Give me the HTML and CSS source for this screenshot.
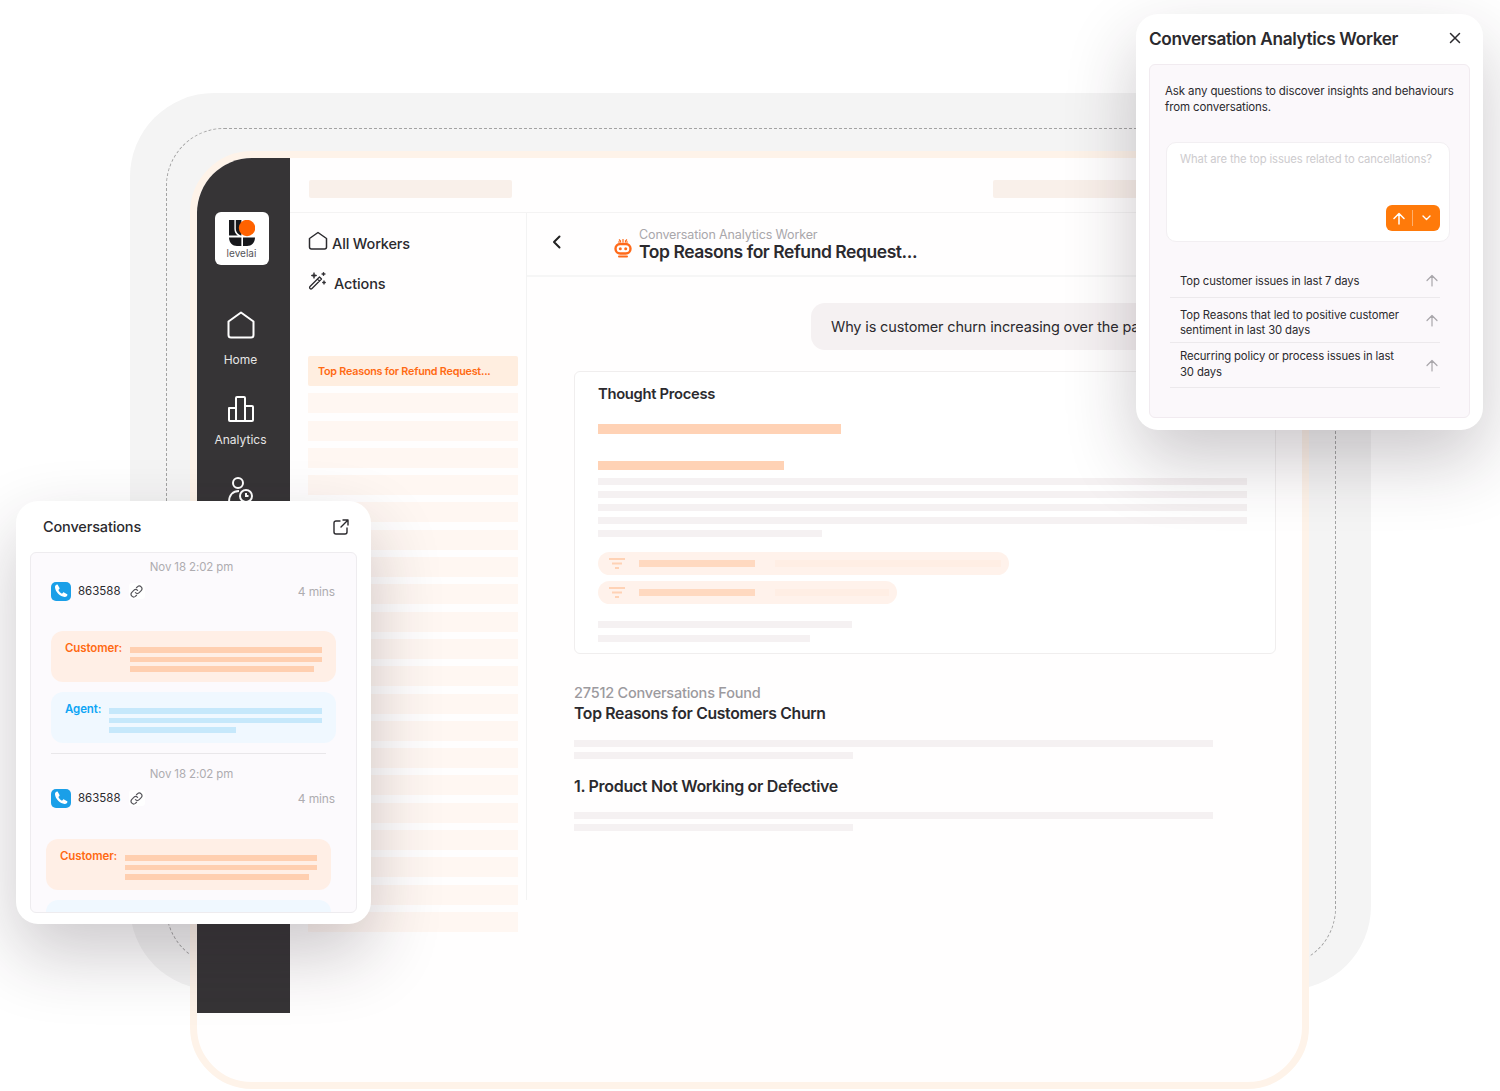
FILE: index.html
```html
<!DOCTYPE html>
<html>

<head>
    <title>Conversation Analytics Worker</title>
    <link rel="stylesheet" href="styles.css">
</head>

<body>

    <div class="scene">
        <div class="backdrop"></div>
        <div class="dashed"></div>

        <!-- Main app window -->
        <div class="frame">
            <aside class="sidebar">
                <div class="logo">
                    <svg width="26" height="26" viewBox="0 0 26 26">
                        <path fill="#17181c" d="M0 0h5.4v9c0 3 1.2 5 3.4 6.6H0z" />
                        <path fill="#17181c" d="M6.8 0h5.6v15.6C9 14.600 6.800 12 6.800 8.500z" />
                        <path fill="#17181c" d="M0 17.500h12.400V26H8C3.500 26 0 22.500 0 17.500z" />
                        <path fill="#17181c" d="M14 17.500h12c0 5-3.500 8.500-8 8.500h-4z" />
                        <circle fill="#ff6200" cx="18" cy="8" r="8.200" />
                    </svg>
                    <span class="logo-name">levelai</span>
                </div>
                <div class="side-item side-home">
                    <svg width="30" height="30" viewBox="0 0 30 30" fill="none" stroke="#fff" stroke-width="2" stroke-linejoin="round">
                        <path d="M2.500 11.500 15 2.500l12.500 9V25a2.500 2.500 0 0 1-2.500 2.500H5A2.500 2.500 0 0 1 2.500 25z" />
                    </svg>
                    <span>Home</span>
                </div>
                <div class="side-item side-analytics">
                    <svg width="30" height="30" viewBox="0 0 30 30" fill="none" stroke="#fff" stroke-width="2" stroke-linejoin="round">
                        <path d="M3 14h7v13H4a1 1 0 0 1-1-1zM10 4a1 1 0 0 1 1-1h7a1 1 0 0 1 1 1v23h-9zM19 12h7a1 1 0 0 1 1 1v13a1 1 0 0 1-1 1h-7z" />
                    </svg>
                    <span>Analytics</span>
                </div>
                <div class="side-item side-agents">
                    <svg width="30" height="30" viewBox="0 0 30 30" fill="none" stroke="#fff" stroke-width="2">
                        <circle cx="12" cy="8" r="5" />
                        <path d="M3 27c0-7 4-11 10-11" />
                        <circle cx="20" cy="21" r="6" />
                        <path d="M20 18v3h2.500" />
                    </svg>
                </div>
            </aside>

            <div class="content">
                <div class="topbar">
                    <div class="top-skel"></div>
                    <div class="top-skel top-skel-right"></div>
                </div>

                <div class="columns">
                    <nav class="workers">
                        <div class="nav-item">
                            <svg width="20" height="20" viewBox="0 0 20 20" fill="none" stroke="#2b2a2e" stroke-width="1.500" stroke-linejoin="round">
                                <path d="M1.500 7.500 10 1.500l8.500 6V16a2 2 0 0 1-2 2h-13a2 2 0 0 1-2-2z" />
                            </svg>
                            <span>All Workers</span>
                        </div>
                        <div class="nav-item nav-item-actions">
                            <svg width="20" height="20" viewBox="0 0 20 20" fill="none" stroke="#2b2a2e" stroke-width="1.300" stroke-linejoin="round">
                                <path d="M2 15.500 11.500 6l2 2L4 17.500a1.400 1.400 0 0 1-2-2zM9.500 8l2 2" />
                                <path fill="#2b2a2e" stroke-width=".6" d="M6 1.500 6.800 3.700 9 4.500 6.800 5.300 6 7.500 5.200 5.300 3 4.500 5.200 3.700zM15.500 1l.6 1.400 1.400.6-1.400.6-.6 1.400-.6-1.400L13.500 3l1.400-.6zM16 9.500l.6 1.400 1.400.6-1.400.6-.6 1.400-.6-1.400-1.400-.6 1.400-.6z" />
                            </svg>
                            <span>Actions</span>
                        </div>

                        <div class="history">
                            <div class="history-active">Top Reasons for Refund Request...</div>
                            <div class="history-row"></div>
                            <div class="history-row"></div>
                            <div class="history-row"></div>
                            <div class="history-row"></div>
                            <div class="history-row"></div>
                            <div class="history-row"></div>
                            <div class="history-row"></div>
                            <div class="history-row"></div>
                            <div class="history-row"></div>
                            <div class="history-row"></div>
                            <div class="history-row"></div>
                            <div class="history-row"></div>
                            <div class="history-row"></div>
                            <div class="history-row"></div>
                            <div class="history-row"></div>
                            <div class="history-row"></div>
                            <div class="history-row"></div>
                            <div class="history-row"></div>
                            <div class="history-row"></div>
                            <div class="history-row"></div>
                        </div>
                    </nav>

                    <main class="chat">
                        <header class="chat-head">
                            <svg class="back" width="10" height="14" viewBox="0 0 10 14" fill="none" stroke="#222" stroke-width="2" stroke-linecap="round" stroke-linejoin="round">
                                <path d="M7.500 1.500 2 7l5.500 5.500" />
                            </svg>
                            <svg class="robot" width="18" height="20" viewBox="0 0 18 20" fill="none" stroke="#ff6a1a">
                                <path stroke-width="1.200" d="M9 1v3.500M5 1.500 7 3.500M13 1.500 11 3.500M4 4h3M11 4h3" />
                                <rect x="1.500" y="6" width="15" height="9.500" rx="4.700" stroke-width="2.400" />
                                <path stroke-width="2" d="M5 18.500h8" stroke-linecap="round" />
                                <circle cx="6.300" cy="10.700" r="1.500" fill="#ff6a1a" stroke="none" />
                                <circle cx="11.700" cy="10.700" r="1.500" fill="#ff6a1a" stroke="none" />
                            </svg>
                            <div class="chat-titles">
                                <div class="chat-sub">Conversation Analytics Worker</div>
                                <div class="chat-title">Top Reasons for Refund Request...</div>
                            </div>
                        </header>

                        <div class="chat-body">
                            <div class="bubble">Why is customer churn increasing over the pa</div>

                            <section class="thought">
                                <h3>Thought Process</h3>
                                <div class="bar bar-a"></div>
                                <div class="bar bar-b"></div>
                                <div class="lines">
                                    <div class="line"></div>
                                    <div class="line"></div>
                                    <div class="line"></div>
                                    <div class="line"></div>
                                    <div class="line line-short"></div>
                                </div>
                                <div class="pill">
                                    <svg width="16" height="12" viewBox="0 0 16 12" fill="#ffd2b5">
                                        <path d="M0 0h16v2H0zM3 4.500h10v2H3zM6 9h4v2H6z" />
                                    </svg>
                                    <div class="pill-strong"></div>
                                    <div class="pill-soft"></div>
                                </div>
                                <div class="pill pill-small">
                                    <svg width="16" height="12" viewBox="0 0 16 12" fill="#ffd2b5">
                                        <path d="M0 0h16v2H0zM3 4.500h10v2H3zM6 9h4v2H6z" />
                                    </svg>
                                    <div class="pill-strong"></div>
                                    <div class="pill-soft"></div>
                                </div>
                                <div class="line line-c"></div>
                                <div class="line line-d"></div>
                            </section>

                            <div class="found">27512 Conversations Found</div>
                            <div class="found-title">Top Reasons for Customers Churn</div>
                            <div class="line line-wide line-first"></div>
                            <div class="line line-half"></div>
                            <div class="product">1. Product Not Working or Defective</div>
                            <div class="line line-wide"></div>
                            <div class="line line-half"></div>
                        </div>
                    </main>
                </div>
            </div>
        </div>

        <!-- Floating conversations card -->
        <div class="card conv">
            <div class="conv-head">
                <span>Conversations</span>
                <svg width="16" height="16" viewBox="0 0 16 16" fill="none" stroke="#2b2a2e" stroke-width="1.400" stroke-linecap="round" stroke-linejoin="round">
                    <path d="M7 2H3a2 2 0 0 0-2 2v9a2 2 0 0 0 2 2h9a2 2 0 0 0 2-2V9M8 8l7-7M10 1h5v5" />
                </svg>
            </div>
            <div class="conv-list">
                <div class="conv-date">Nov 18 2:02 pm</div>
                <div class="conv-meta">
                    <span class="phone">
                        <svg width="14" height="14" viewBox="0 0 24 24" fill="#fff">
                            <path d="M6.600 1.500 9.500 6.800c.3.600.2 1.300-.3 1.800L7.500 10.300c1 2.600 3.600 5.200 6.200 6.200l1.700-1.700c.5-.5 1.200-.6 1.800-.3l5.300 2.900c.6.300.8 1 .6 1.600-.7 2.100-2.600 3.500-4.800 3.300C10.300 21.600 2.400 13.700 1.700 5.700 1.500 3.500 2.900 1.600 5 .9c.6-.2 1.300 0 1.600.6z" />
                        </svg>
                    </span>
                    <span class="conv-id">863588</span>
                    <span class="link-box">
                        <svg width="13" height="13" viewBox="0 0 24 24" fill="none" stroke="#55545a" stroke-width="2.200" stroke-linecap="round">
                            <path d="M10 14a5 5 0 0 0 7 0l4-4a5 5 0 0 0-7-7l-2 2M14 10a5 5 0 0 0-7 0l-4 4a5 5 0 0 0 7 7l2-2" />
                        </svg>
                    </span>
                    <span class="conv-time">4 mins</span>
                </div>
                <div class="msg msg-customer">
                    <span class="msg-who">Customer:</span>
                    <div class="msg-lines">
                        <div></div>
                        <div></div>
                        <div class="msg-line-end"></div>
                    </div>
                </div>
                <div class="msg msg-agent">
                    <span class="msg-who">Agent:</span>
                    <div class="msg-lines">
                        <div></div>
                        <div></div>
                        <div class="msg-line-end"></div>
                    </div>
                </div>
                <div class="conv-divider"></div>
                <div class="conv-date">Nov 18 2:02 pm</div>
                <div class="conv-meta">
                    <span class="phone">
                        <svg width="14" height="14" viewBox="0 0 24 24" fill="#fff">
                            <path d="M6.600 1.500 9.500 6.800c.3.600.2 1.300-.3 1.800L7.500 10.300c1 2.600 3.600 5.200 6.200 6.200l1.700-1.700c.5-.5 1.200-.6 1.800-.3l5.300 2.900c.6.300.8 1 .6 1.600-.7 2.100-2.600 3.500-4.800 3.300C10.300 21.600 2.400 13.700 1.700 5.700 1.500 3.500 2.900 1.600 5 .9c.6-.2 1.300 0 1.600.6z" />
                        </svg>
                    </span>
                    <span class="conv-id">863588</span>
                    <span class="link-box">
                        <svg width="13" height="13" viewBox="0 0 24 24" fill="none" stroke="#55545a" stroke-width="2.200" stroke-linecap="round">
                            <path d="M10 14a5 5 0 0 0 7 0l4-4a5 5 0 0 0-7-7l-2 2M14 10a5 5 0 0 0-7 0l-4 4a5 5 0 0 0 7 7l2-2" />
                        </svg>
                    </span>
                    <span class="conv-time">4 mins</span>
                </div>
                <div class="msg msg-customer msg-shift">
                    <span class="msg-who">Customer:</span>
                    <div class="msg-lines">
                        <div></div>
                        <div></div>
                        <div class="msg-line-end"></div>
                    </div>
                </div>
                <div class="msg msg-agent msg-shift"></div>
            </div>
        </div>

        <!-- Floating worker panel -->
        <div class="card worker">
            <div class="worker-head">
                <span>Conversation Analytics Worker</span>
                <svg width="12" height="12" viewBox="0 0 12 12" fill="none" stroke="#2b2a2e" stroke-width="1.500" stroke-linecap="round">
                    <path d="M1.500 1.500l9 9M10.500 1.500l-9 9" />
                </svg>
            </div>
            <div class="worker-box">
                <p class="worker-intro">Ask any questions to discover insights and behaviours from conversations.</p>
                <div class="ask">
                    <div class="ask-hint">What are the top issues related to cancellations?</div>
                    <div class="ask-btn">
                        <span class="ask-send">
                            <svg width="12" height="13" viewBox="0 0 12 13" fill="none" stroke="#fff" stroke-width="1.500" stroke-linecap="round" stroke-linejoin="round">
                                <path d="M6 12V1.500M1 6.500l5-5 5 5" />
                            </svg>
                        </span>
                        <span class="ask-more">
                            <svg width="9" height="6" viewBox="0 0 9 6" fill="none" stroke="#fff" stroke-width="1.400" stroke-linecap="round" stroke-linejoin="round">
                                <path d="M1 1l3.500 3.500L8 1" />
                            </svg>
                        </span>
                    </div>
                </div>
                <div class="suggest">
                    <div class="suggest-row suggest-one">
                        <span>Top customer issues in last 7 days</span>
                        <svg width="12" height="13" viewBox="0 0 12 13" fill="none" stroke="#a9a7ab" stroke-width="1.200" stroke-linecap="round" stroke-linejoin="round">
                            <path d="M6 12V1.500M1 6.500l5-5 5 5" />
                        </svg>
                    </div>
                    <div class="suggest-row suggest-two">
                        <span>Top Reasons that led to positive customer sentiment in last 30 days</span>
                        <svg width="12" height="13" viewBox="0 0 12 13" fill="none" stroke="#a9a7ab" stroke-width="1.200" stroke-linecap="round" stroke-linejoin="round">
                            <path d="M6 12V1.500M1 6.500l5-5 5 5" />
                        </svg>
                    </div>
                    <div class="suggest-row suggest-three">
                        <span>Recurring policy or process issues in last 30 days</span>
                        <svg width="12" height="13" viewBox="0 0 12 13" fill="none" stroke="#a9a7ab" stroke-width="1.200" stroke-linecap="round" stroke-linejoin="round">
                            <path d="M6 12V1.500M1 6.500l5-5 5 5" />
                        </svg>
                    </div>
                </div>
            </div>
        </div>
    </div>

</body>

</html>
```

FILE: styles.css
```css
* {
    box-sizing: border-box;
}

body {
    margin: 0;
    background: #fff;
    font-family: Inter, "Noto Sans", sans-serif;
    color: #2b2a2e;
}

.scene {
    position: relative;
    width: 1500px;
    height: 1091px;
    overflow: hidden;
    background: #fff;
}

.backdrop {
    position: absolute;
    left: 130px;
    top: 93px;
    width: 1241px;
    height: 897px;
    background: #f4f4f4;
    border-radius: 84px;
}

.dashed {
    position: absolute;
    left: 166px;
    top: 128px;
    width: 1170px;
    height: 838px;
    border: 1px dashed #a3a3a3;
    border-radius: 58px;
}

.frame {
    position: absolute;
    left: 190px;
    top: 151px;
    width: 1119px;
    height: 938px;
    display: flex;
    overflow: hidden;
    background: #fffefe;
    border: 7px solid #fef3e9;
    border-radius: 62px;
}

/* sidebar */
.sidebar {
    width: 93px;
    height: 855px;
    flex-shrink: 0;
    padding-top: 54px;
    display: flex;
    flex-direction: column;
    align-items: center;
    background: #363436;
}

.logo {
    width: 54px;
    height: 53px;
    margin-left: -4px;
    padding-top: 8px;
    display: flex;
    flex-direction: column;
    align-items: center;
    background: #fff;
    border-radius: 6px;
}

.logo-name {
    margin-top: 1px;
    font-size: 10px;
    line-height: 13px;
    color: #55545a;
}

.side-item {
    width: 100%;
    margin-left: -6px;
    height: 80px;
    display: flex;
    flex-direction: column;
    align-items: center;
    gap: 8px;
    font-size: 12px;
    line-height: 16px;
    color: #e6e6e6;
}

.side-home {
    margin-top: 45px;
    gap: 12px;
}

.side-analytics svg {
    margin-top: 4px;
}

.side-agents svg {
    margin-top: 5px;
}

/* top area */
.content {
    flex: 1;
    min-width: 0;
}

.topbar {
    height: 55px;
    padding: 22px 0 0 19px;
    display: flex;
    gap: 481px;
    border-bottom: 1px solid #f4f3f3;
}

.top-skel {
    width: 203px;
    height: 18px;
    background: #f9f0ea;
    border-radius: 2px;
}

.top-skel-right {
    width: 190px;
}

.columns {
    display: flex;
}

/* workers column */
.workers {
    width: 237px;
    flex-shrink: 0;
    padding: 10px 0 0 18px;
    background: linear-gradient(#f3f3f3, #f3f3f3) right top / 1px 687px no-repeat;
}

.nav-item {
    height: 40px;
    display: flex;
    align-items: center;
    gap: 4px;
    font-size: 14.5px;
    font-weight: 500;
    letter-spacing: -0.01em;
}

.nav-item svg {
    margin-top: -5px;
}

.nav-item-actions {
    gap: 6px;
}

.history {
    width: 210px;
    margin-top: 53px;
    display: flex;
    flex-direction: column;
    gap: 7.3px;
}

.history-active {
    height: 30px;
    padding-left: 10px;
    line-height: 32px;
    font-size: 10.75px;
    font-weight: 600;
    letter-spacing: -0.02em;
    color: #ff6a13;
    background: #ffeee0;
    border-radius: 2px;
}

.history-row {
    height: 20px;
    background: #fff7f2;
}

/* chat column */
.chat {
    flex: 1;
    min-width: 0;
}

.chat-head {
    height: 64px;
    position: relative;
    display: flex;
    align-items: center;
    border-bottom: 2px solid #f6f6f6;
}

.back {
    margin: -4px 0 0 25px;
}

.robot {
    margin: 0 0 -8px 52px;
}

.chat-titles {
    margin-left: 7px;
    padding-top: 2px;
}

.chat-sub {
    font-size: 12.5px;
    line-height: 13px;
    color: #a9a7ab;
    letter-spacing: -0.01em;
}

.chat-title {
    font-size: 17.5px;
    line-height: 22px;
    font-weight: 600;
    letter-spacing: -0.025em;
}

.chat-body {
    padding: 26px 0 0 47px;
}

.bubble {
    width: 360px;
    height: 47px;
    margin-left: 237px;
    padding-left: 20px;
    line-height: 47px;
    font-size: 14.5px;
    letter-spacing: -0.01em;
    white-space: nowrap;
    overflow: hidden;
    background: #f5f1f2;
    border-radius: 14px;
}

.thought {
    width: 702px;
    height: 283px;
    margin-top: 21px;
    padding: 12px 0 0 23px;
    background: #fff;
    border: 1px solid #f0eeee;
    border-radius: 6px;
}

.thought h3 {
    margin: 0;
    font-size: 14.75px;
    line-height: 20px;
    font-weight: 600;
    letter-spacing: -0.02em;
}

.bar {
    background: #ffd2b5;
}

.bar-a {
    width: 243px;
    height: 10px;
    margin-top: 20px;
}

.bar-b {
    width: 186px;
    height: 9px;
    margin-top: 27px;
}

.lines {
    margin-top: 8px;
    display: flex;
    flex-direction: column;
    gap: 6px;
}

.line {
    width: 649px;
    height: 7px;
    background: #f5f1f2;
}

.line-short {
    width: 224px;
}

.pill {
    width: 411px;
    height: 23px;
    margin-top: 15px;
    padding-left: 11px;
    display: flex;
    align-items: center;
    background: #fff2eb;
    border-radius: 12px;
}

.pill-small {
    width: 299px;
    margin-top: 6px;
}

.pill-strong {
    width: 116px;
    height: 7px;
    margin-left: 14px;
    background: #ffd9c0;
}

.pill-soft {
    flex: 1;
    height: 7px;
    margin: 0 8px 0 20px;
    background: #ffeee4;
}

.line-c {
    width: 254px;
    margin-top: 17px;
}

.line-d {
    width: 212px;
    margin-top: 7px;
}

.found {
    margin-top: 29px;
    font-size: 14.5px;
    line-height: 20px;
    font-weight: 500;
    letter-spacing: -0.015em;
    color: #9c9a9e;
}

.found-title {
    margin-bottom: 16px;
    font-size: 15.75px;
    line-height: 21px;
    font-weight: 600;
    letter-spacing: -0.02em;
}

.line-wide {
    width: 639px;
    margin-bottom: 5px;
}

.line-half {
    width: 279px;
}

.product {
    margin: 16px 0 15px;
    font-size: 16px;
    line-height: 22px;
    font-weight: 600;
    letter-spacing: -0.02em;
}

/* floating cards */
.card {
    position: absolute;
    background: #fff;
    border-radius: 22px;
    box-shadow: 0 30px 70px rgba(40, 30, 40, 0.24);
}

.conv {
    left: 16px;
    top: 501px;
    width: 355px;
    height: 423px;
}

.conv-head {
    height: 51px;
    padding: 0 22px 0 27px;
    display: flex;
    align-items: center;
    justify-content: space-between;
    font-size: 14.500px;
    font-weight: 500;
    letter-spacing: -0.01em;
}

.conv-list {
    height: 361px;
    margin: 0 14px;
    padding: 6px 21px 0 20px;
    overflow: hidden;
    background: #fcfafd;
    border: 1px solid #eeecef;
    border-radius: 6px;
}

.conv-date {
    text-align: center;
    margin-right: 3px;
    font-size: 11.5px;
    line-height: 16px;
    letter-spacing: -0.01em;
    color: #aeacb0;
}

.conv-meta {
    height: 20px;
    margin-top: 6px;
    display: flex;
    align-items: center;
}

.phone {
    width: 20px;
    height: 19px;
    display: flex;
    align-items: center;
    justify-content: center;
    background: #1a9fe8;
    border-radius: 5px;
}

.conv-id {
    margin-left: 7px;
    font-size: 11.5px;
}

.link-box {
    width: 16px;
    height: 16px;
    margin: 0 0 0 8px;
    display: flex;
    align-items: center;
    justify-content: center;
    background: #fff;
    border-radius: 3px;
}

.conv-time {
    margin-left: auto;
    font-size: 12px;
    letter-spacing: -0.01em;
    color: #aeacb0;
}

.msg {
    width: 285px;
    height: 51px;
    padding: 10px 14px 0;
    display: flex;
    border-radius: 12px;
    font-size: 11.5px;
    font-weight: 600;
    letter-spacing: -0.01em;
}

.msg-who {
    line-height: 14px;
    white-space: nowrap;
}

.msg-lines {
    flex: 1;
    padding-top: 6px;
    display: flex;
    flex-direction: column;
    gap: 4px;
}

.msg-lines div {
    height: 5.500px;
}

.msg-customer {
    margin-top: 30px;
    background: #ffefe6;
    color: #ff6a13;
}

.msg-customer .msg-who {
    width: 65px;
}

.msg-customer .msg-lines div {
    background: #ffcfb0;
}

.msg-agent {
    margin-top: 10px;
    background: #f0f8ff;
    color: #0ea5f5;
}

.msg-agent .msg-who {
    width: 44px;
}

.msg-agent .msg-lines div {
    background: #c6e8fb;
}

.msg-customer .msg-line-end {
    width: 184px;
}

.msg-agent .msg-line-end {
    width: 127px;
}

.msg-shift {
    margin-left: -5px;
}

.msg-customer.msg-shift {
    margin-top: 31px;
}

.conv-divider {
    width: 275px;
    height: 1px;
    margin: 10px 0 12px;
    background: #e9e7ea;
}

.worker {
    left: 1136px;
    top: 14px;
    width: 347px;
    height: 416px;
}

.worker-head {
    height: 48px;
    margin-bottom: 2px;
    padding: 0 22px 0 13px;
    display: flex;
    align-items: center;
    justify-content: space-between;
    font-size: 17.25px;
    font-weight: 600;
    letter-spacing: -0.02em;
}

.worker-box {
    height: 354px;
    margin: 0 13px;
    padding: 19px 8px 0 15px;
    background: #fbf8fb;
    border: 1px solid #f1ebf0;
    border-radius: 6px;
}

.worker-intro {
    margin: 0;
    font-size: 11.5px;
    line-height: 15.500px;
    letter-spacing: -0.01em;
}

.ask {
    width: 284px;
    height: 100px;
    margin: 27px 0 0 1px;
    padding: 8px 9px 10px 13px;
    display: flex;
    flex-direction: column;
    justify-content: space-between;
    background: #fff;
    border: 1px solid #f2eff2;
    border-radius: 10px;
}

.ask-hint {
    font-size: 11.25px;
    line-height: 16px;
    letter-spacing: -0.01em;
    color: #cdcbce;
    white-space: nowrap;
}

.ask-btn {
    align-self: flex-end;
    width: 54px;
    height: 26px;
    display: flex;
    align-items: center;
    background: #ff7a0a;
    border-radius: 6px;
}

.ask-send {
    width: 27px;
    height: 16px;
    display: flex;
    align-items: center;
    justify-content: center;
    border-right: 1px solid #ffb06e;
}

.ask-more {
    flex: 1;
    display: flex;
    justify-content: center;
}

.suggest {
    width: 270px;
    margin: 22px 0 0 5px;
}

.suggest-row {
    height: 45px;
    padding: 0 2px 0 10px;
    display: flex;
    align-items: center;
    justify-content: space-between;
    gap: 10px;
    font-size: 11.3px;
    line-height: 15.500px;
    letter-spacing: -0.01em;
    border-bottom: 1px solid #ece9ec;
}

.suggest-row span {
    max-width: 226px;
}

.suggest-row svg {
    flex-shrink: 0;
}

.suggest-one {
    height: 34px;
}

.suggest-one span {
    margin-top: 2px;
}

.suggest-two span {
    margin-top: 6px;
}

.suggest-three span {
    margin-top: -1px;
}
```
